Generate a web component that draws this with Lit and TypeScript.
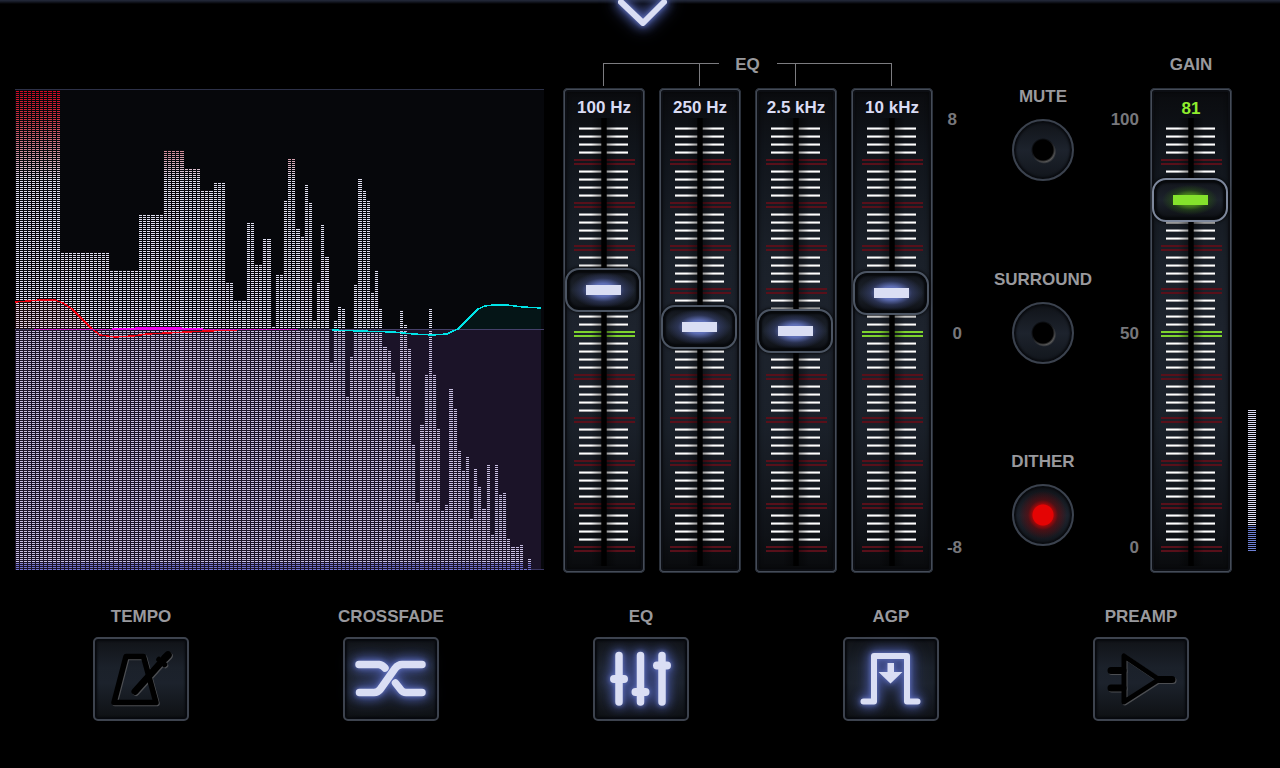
import { LitElement, html, css, svg } from "lit";
import { customElement, property, state } from "lit/decorators.js";
import { classMap } from "lit/directives/class-map.js";

const WIDE = new Set([8, 16, 24, 33, 40, 47, 55, 61, 68, 75, 83, 89, 98, 105, 113, 120]);

/* Run-length peaks: [number of bars, top row of the peak]. */
const PEAKS: [number, number][] = [
  [11, 2], [12, 164], [7, 182], [6, 126], [5, 62], [4, 80], [3, 102], [3, 94], [2, 194], [3, 212],
  [2, 134], [2, 176], [2, 150], [1, 238], [2, 186], [1, 112], [2, 70], [1, 140], [1, 148], [1, 96],
  [1, 114], [1, 232], [1, 194], [1, 136], [1, 168], [1, 274], [1, 232], [1, 218], [1, 220], [1, 308],
  [1, 268], [1, 196], [1, 90], [1, 102], [1, 112], [1, 204], [1, 182], [1, 220], [1, 258], [1, 262],
  [1, 284], [1, 308], [1, 222], [1, 236], [1, 260], [1, 356], [1, 414], [1, 336], [1, 286], [1, 220],
  [1, 286], [1, 340], [1, 422], [1, 416], [1, 300], [1, 320], [1, 362], [1, 382], [1, 368], [1, 430],
  [1, 380], [1, 398], [1, 420], [1, 376], [1, 446], [1, 376], [1, 406], [1, 404], [1, 450], [2, 458],
  [1, 456], [1, 480], [1, 470],
];

function barPaths() {
  let x = 1;
  let i = 0;
  let narrow = "";
  let wide = "";
  for (const [count, top] of PEAKS) {
    for (let n = 0; n < count; n++, i++) {
      if (WIDE.has(i)) {
        wide += `M${x + 2} ${top}V481`;
        x += 5;
      } else {
        narrow += `M${x + 1.5} ${top}V481`;
        x += 4;
      }
    }
  }
  return { narrow, wide };
}

@customElement("spectrum-view")
export class SpectrumView extends LitElement {
  static styles = css`
    :host { display: block; }
    svg { display: block; width: 100%; height: 481px; }
    .bars { fill: none; stroke: url(#level); stroke-dasharray: 1 1; }
    .narrow { stroke-width: 3; }
    .wide { stroke-width: 4; }
    .curve { fill: none; stroke-width: 1.5; }
  `;

  render() {
    const { narrow, wide } = barPaths();
    const low = "M0 213L13 212L25 211H40L48 214L57 220L67 230L77 240";
    const high = "L443 240L455 228L463 220L470 217L478 216L492 216L508 218L526 219";
    return html`
      <svg viewBox="0 0 529 481" preserveAspectRatio="none" role="img" aria-label="Spectrum" shape-rendering="crispEdges">
        <defs>
          <linearGradient id="level" gradientUnits="userSpaceOnUse" x1="0" y1="0" x2="0" y2="481">
            <stop offset="0" stop-color="#d0021f" />
            <stop offset="0.06" stop-color="#cc3040" />
            <stop offset="0.13" stop-color="#d08a98" />
            <stop offset="0.19" stop-color="#dedeee" />
            <stop offset="0.985" stop-color="#dedef4" />
            <stop offset="0.987" stop-color="#7480dc" />
          </linearGradient>
        </defs>
        <rect width="529" height="481" fill="#06070b" />
        <path class="bars narrow" d=${narrow} />
        <path class="bars wide" d=${wide} />
        <path d="${low}H0Z" fill="#ff2020" fill-opacity="0.08" />
        <path d="M443 240${high}V240Z" fill="#00ffd8" fill-opacity="0.06" />
        <rect y="241" width="526" height="240" fill="#7348a0" fill-opacity="0.2" />
        <rect width="529" height="1" fill="#2d3148" />
        <rect y="240" width="529" height="1" fill="#45406a" />
        <rect y="480" x="516" width="13" height="1" fill="#3a3560" />
        <path class="curve" stroke="#f00010" d="${low}L85 246L100 248L118 247L132 245L152 244L172 243L192 242L222 241" />
        <rect x="19" y="240" width="264" height="1" fill="#c814c8" />
        <rect x="97" y="239" width="91" height="2" fill="#f000f0" />
        <rect x="120" y="238" width="47" height="2" fill="#f000f0" />
        <path class="curve" stroke="#00e4e8" d="M317 241L345 242L378 243L398 245L418 246L432 245L438 242${high}" />
      </svg>
    `;
  }
}

@customElement("fader-strip")
export class FaderStrip extends LitElement {
  @property() label = "";
  @property({ type: Boolean }) readout = false;
  @property({ type: Number }) min = -8;
  @property({ type: Number }) max = 8;
  @property({ type: Number }) value = 0;

  static styles = css`
    :host { display: block; }
    .panel {
      box-sizing: border-box;
      display: grid;
      grid-template: 485px / 82px;
      justify-items: center;
      width: 82px;
      height: 485px;
      border-radius: 5px;
      background:
        linear-gradient(#0a0b0e, #10141a 12%, #1a2029 35%, #1d232d 50%, #1a2029 70%, #0f1217 92%, #090a0c);
      box-shadow: inset 0 0 0 1px #2a303a, inset 0 0 0 2px #454c58, inset 0 0 0 4px #0c0e13, inset 0 0 4px 4px #00000080;
    }
    .panel > * { grid-area: 1 / 1; }
    .name {
      padding-top: 10px;
      font: bold 17px/20px "Liberation Sans", Arial, sans-serif;
      color: #dadcf4;
      white-space: nowrap;
    }
    .readout .name { padding-top: 11px; color: #90ee2e; }
    svg { display: block; }
    .fader {
      appearance: none;
      writing-mode: vertical-lr;
      direction: rtl;
      width: 76px;
      height: 476px;
      margin: 7px 2px 0 0;
      background: none;
      outline: none;
      cursor: pointer;
    }
    .readout .fader { margin-top: 8px; }
    .fader::-webkit-slider-runnable-track { width: 76px; background: none; }
    .fader::-webkit-slider-thumb {
      appearance: none;
      box-sizing: border-box;
      width: 76px;
      height: 44px;
      border: 2px solid #4c5563;
      border-radius: 14px;
      background:
        linear-gradient(#dadef4, #dadef4) center / 35px 10px no-repeat,
        radial-gradient(ellipse 32px 18px at center, #6070b8 35%, #36406ca0 66%, transparent),
        linear-gradient(#12151b, #1c222c 50%, #0c0e12);
      box-shadow: inset 0 0 2px 3px #07090c, 0 0 3px 1px #000000a0;
    }
    .readout .fader::-webkit-slider-thumb {
      border-color: #7d879b;
      background:
        linear-gradient(#84e22c, #84e22c) center / 35px 10px no-repeat,
        radial-gradient(ellipse 28px 15px at center, #447c1c 40%, #284c18a0 66%, transparent),
        linear-gradient(#12151b, #1c222c 50%, #0c0e12);
    }
  `;

  private scale() {
    const lines = [];
    for (let group = 0; group < 10; group++) {
      for (let n = 0; n < 4; n++) {
        const y = 39 + group * 43 + n * 8;
        lines.push(svg`
          <rect x="16" y=${y} width="49" height="1" fill="#8a8c90" />
          <rect x="16" y=${y + 1} width="49" height="1" fill="#ffffff" />
          <rect x="16" y=${y + 2} width="49" height="1" fill="#a4a4a6" />
        `);
      }
      const y = 71 + group * 43;
      const color = group === 4 ? "#7ed32e" : "#58101a";
      lines.push(svg`<rect x="11" y=${y} width="61" height="2" fill=${color} /><rect x="11" y=${y + 4} width="61" height="2" fill=${color} />`);
    }
    return lines;
  }

  private onInput(event: Event) {
    this.value = Number((event.target as HTMLInputElement).value);
  }

  render() {
    return html`
      <div class=${classMap({ panel: true, readout: this.readout })}>
        <svg width="82" height="485" viewBox="0 0 82 485" aria-hidden="true">
          <defs>
            <linearGradient id="shade">
              <stop offset="0" stop-color="#000" stop-opacity="0" />
              <stop offset="0.5" stop-color="#000" stop-opacity="0.5" />
              <stop offset="1" stop-color="#000" stop-opacity="0" />
            </linearGradient>
          </defs>
          ${this.scale()}
          <rect x="28" y="30" width="26" height="448" fill="url(#shade)" />
          <rect x="39" y="30" width="4" height="448" fill="#000" />
          <rect x="38" y="30" width="6" height="448" fill="#000" fill-opacity="0.7" />
        </svg>
        <label class="name" for="fader">${this.readout ? Math.round(this.value) : this.label}</label>
        <input
          id="fader"
          class="fader"
          type="range"
          aria-label=${this.label}
          min=${this.min}
          max=${this.max}
          step="any"
          .value=${String(this.value)}
          @input=${this.onInput}
        />
      </div>
    `;
  }
}

const ICONS = {
  tempo: svg`
    <path d="M33 19.5H50.5L63 65.5H21Z" stroke-width="5.5" />
    <path d="M42 54.5L72 21" stroke-width="7" />
    <path d="M75 18L72 21" stroke-width="7.5" />
    <path d="M66 22.5L71.5 27.500" stroke-width="5.5" />`,
  crossfade: svg`
    <path d="M16 27.5H36Q39.5 28 42 31" stroke-width="7.5" />
    <path d="M16.5 55.5H31Q35 55.5 37.5 52L52 31.5Q55 27.5 59 27.5H79" stroke-width="7.5" />
    <path d="M52.5 46L58 53Q60 55.5 63 55.5H79" stroke-width="7.5" />`,
  eq: svg`
    <path d="M26 18.5V65M47.5 18.5V65M69 18.5V65" stroke-width="7.5" />
    <path d="M21 42H31M42.5 55H52.5M64 28.5H74" stroke-width="8" />`,
  agp: svg`
    <path d="M20.5 64.5H31V19H64V64.5H74.5" stroke-width="6" />
    <path d="M44.5 26H51V35H59.5L47.5 46.5L35.5 35H44.5Z" class="solid" />`,
  preamp: svg`
    <path d="M31 19V65L66 42.5Z" stroke-width="5" />
    <path d="M18 33.5H30M18 51H30M66 42.5H79" stroke-width="7" />`,
};

type IconName = keyof typeof ICONS;

@customElement("app-root")
export class AppRoot extends LitElement {
  @state() private switches = [
    { id: "mute", label: "MUTE", on: false },
    { id: "surround", label: "SURROUND", on: false },
    { id: "dither", label: "DITHER", on: true },
  ];

  @state() private modes: { icon: IconName; label: string; on: boolean }[] = [
    { icon: "tempo", label: "TEMPO", on: false },
    { icon: "crossfade", label: "CROSSFADE", on: true },
    { icon: "eq", label: "EQ", on: true },
    { icon: "agp", label: "AGP", on: true },
    { icon: "preamp", label: "PREAMP", on: false },
  ];

  private bands = [
    { label: "100 Hz", value: 1.6 },
    { label: "250 Hz", value: 0.24 },
    { label: "2.5 kHz", value: 0.06 },
    { label: "10 kHz", value: 1.5 },
  ];

  private level = 142;

  static styles = css`
    :host {
      display: block;
      min-height: 100vh;
      overflow: hidden;
      background: #000;
      color: #99999d;
      font: bold 17px/20px "Liberation Sans", Arial, sans-serif;
    }
    .top {
      display: flex;
      justify-content: center;
      height: 54px;
      padding-left: 6px;
      background: linear-gradient(#242a3a, #1c2130 1px, #000 4px) no-repeat;
    }
    .handle {
      width: 96px;
      height: 54px;
      padding: 0;
      border: 0;
      background: none;
      cursor: pointer;
    }
    .handle svg { display: block; overflow: visible; }
    .deck {
      display: grid;
      grid-template-columns: minmax(0, 1fr) 370px 44px 132px 41px 82px 24px;
      grid-template-rows: 34px 485px;
      padding: 0 24px 0 15px;
    }
    .spectrum { grid-area: 2 / 1; margin: 1px 19px 0 0; }
    .bracket {
      grid-area: 1 / 2;
      display: flex;
      padding: 9px 41px 2px 40px;
    }
    .bracket .text { width: 58px; margin-top: -8px; text-align: center; }
    .wing {
      flex: 1;
      display: flex;
      border: 0 solid #7c7c80;
      border-top-width: 1px;
    }
    .wing i { width: 95px; border-right: 1px solid #7c7c80; }
    .left { border-left-width: 1px; }
    .right { border-right-width: 1px; justify-content: flex-end; }
    .right i { border-right: 0; border-left: 1px solid #7c7c80; }
    .bands { grid-area: 2 / 2; display: flex; justify-content: space-between; }
    .scale {
      grid-row: 2;
      display: flex;
      flex-direction: column;
      justify-content: space-between;
      padding: 22px 11px 15px 0;
      color: #77777b;
      text-align: right;
    }
    .scale.db { padding-right: 15px; }
    .scale.db :first-child { padding-right: 5px; }
    .switches {
      grid-row: 2;
      display: flex;
      flex-direction: column;
      justify-content: space-between;
      margin: -1px 0 27px;
    }
    .switch { display: flex; flex-direction: column; align-items: center; gap: 12px; }
    .knob {
      appearance: none;
      box-sizing: border-box;
      width: 62px;
      height: 62px;
      margin: 0;
      border: 2px solid #3b424e;
      border-radius: 50%;
      background:
        radial-gradient(circle at 50% 50%, #000 10px, #00000000 12px),
        radial-gradient(circle at 52% 53%, #585858 10px, transparent 12px),
        linear-gradient(#101318, #1d232d 50%, #12161c);
      box-shadow: inset 0 0 2px 2px #090b0f;
      cursor: pointer;
    }
    .knob:checked {
      background:
        radial-gradient(circle at 50% 50%, #e40404 10px, #e4040400 11px),
        radial-gradient(circle at 50% 50%, #c00404 9px, #70080a90 15px, transparent 24px),
        linear-gradient(#101318, #1d232d 50%, #12161c);
    }
    .gain-title { grid-area: 1 / 6; padding-top: 1px; text-align: center; }
    .strip { grid-area: 2 / 6; }
    .meter {
      grid-area: 2 / 7;
      align-self: end;
      justify-self: end;
      width: 8px;
      margin-bottom: 22px;
      background:
        repeating-linear-gradient(to top, transparent 0 1px, #000 1px 2px),
        linear-gradient(to top, #6e80d4 25px, #dcdcf4 25px);
    }
    .modes {
      display: grid;
      grid-template-columns: repeat(5, 1fr);
      padding: 34px 14px 48px 16px;
    }
    .mode { display: flex; flex-direction: column; align-items: center; gap: 10px; }
    .pad {
      box-sizing: border-box;
      width: 96px;
      height: 84px;
      padding: 0;
      border: 2px solid #3d434e;
      border-radius: 5px;
      background: linear-gradient(#101317, #1b212a 35%, #1c222c 55%, #0e1013);
      box-shadow: inset 0 0 2px 2px #07090d;
      cursor: pointer;
    }
    .pad svg { display: block; margin: -2px; overflow: visible; }
    .glyph {
      fill: none;
      stroke: #000;
      stroke-linecap: round;
      stroke-linejoin: round;
      filter: drop-shadow(1px 1px 0 #4c4e52);
    }
    .solid { fill: #dadef4; stroke: none; }
    .lit {
      stroke: #dadef4;
      filter: drop-shadow(0 0 2px #6474c0) drop-shadow(0 0 5px #4a589c) drop-shadow(0 0 7px #3c4a88);
    }
  `;

  private toggleSwitch(index: number) {
    this.switches = this.switches.map((s, i) => (i === index ? { ...s, on: !s.on } : s));
  }

  private toggleMode(index: number) {
    this.modes = this.modes.map((m, i) => (i === index ? { ...m, on: !m.on } : m));
  }

  render() {
    return html`
      <header class="top">
        <button class="handle" aria-label="Open panel">
          <svg width="96" height="54" viewBox="0 0 96 54">
            <path class="glyph lit" d="M26 2L48 23L69 2" stroke-width="6" />
          </svg>
        </button>
      </header>
      <main class="deck">
        <spectrum-view class="spectrum"></spectrum-view>
        <div class="bracket">
          <div class="wing left"><i></i></div>
          <span class="text">EQ</span>
          <div class="wing right"><i></i></div>
        </div>
        <div class="bands">
          ${this.bands.map((b) => html`<fader-strip .label=${b.label} .value=${b.value}></fader-strip>`)}
        </div>
        <div class="scale db"><span>8</span><span>0</span><span>-8</span></div>
        <div class="switches">
          ${this.switches.map(
            (s, i) => html`
              <div class="switch">
                <label for=${s.id}>${s.label}</label>
                <input class="knob" type="checkbox" id=${s.id} .checked=${s.on} @change=${() => this.toggleSwitch(i)} />
              </div>
            `,
          )}
        </div>
        <div class="scale"><span>100</span><span>50</span><span>0</span></div>
        <span class="gain-title">GAIN</span>
        <fader-strip class="strip" label="Gain" readout .min=${0} .max=${100} .value=${81}></fader-strip>
        <div class="meter" role="meter" aria-label="Output level" aria-valuenow=${this.level} style="height:${this.level}px"></div>
      </main>
      <nav class="modes">
        ${this.modes.map(
          (m, i) => html`
            <div class="mode">
              <label for=${m.icon}>${m.label}</label>
              <button class="pad" id=${m.icon} aria-pressed=${m.on} @click=${() => this.toggleMode(i)}>
                <svg width="96" height="84" viewBox="0 0 96 84">
                  <g class=${classMap({ glyph: true, lit: m.on })}>${ICONS[m.icon]}</g>
                </svg>
              </button>
            </div>
          `,
        )}
      </nav>
    `;
  }
}
